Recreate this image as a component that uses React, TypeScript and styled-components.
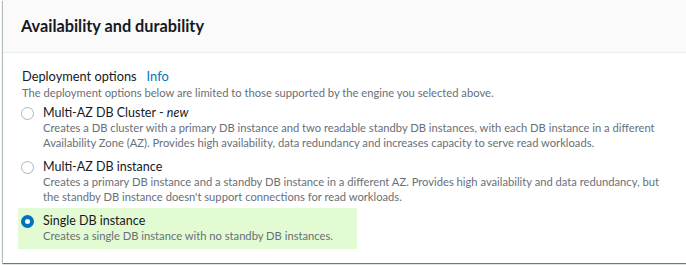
import * as React from 'react'
import styled, {createGlobalStyle} from 'styled-components'

const GlobalStyle = createGlobalStyle`
  html, body {
    margin: 0;
    padding: 0;
    background: #ffffff;
    overflow: hidden;
  }
  body {
    font-family: Lato, "Liberation Sans", sans-serif;
    color: #16191f;
  }
`

const SPage = styled.div`
  padding: 0 0 2px 3px;
  width: 720px;
`

const SContainer = styled.div`
  background: #ffffff;
  box-shadow: 0 1px 1px 0 rgba(0, 28, 36, 0.45), -1px 1px 1px 0 rgba(0, 28, 36, 0.25);
`

const SHeader = styled.div`
  height: 53px;
  box-sizing: border-box;
  background: #fafafa;
  border-bottom: 1px solid #eaeded;
  display: flex;
  align-items: center;
  padding: 0 18px;
`

const STitle = styled.h2`
  margin: 0;
  font-size: 16.3px;
  line-height: 20px;
  font-weight: 700;
  color: #16191f;
`

const SContent = styled.div`
  padding: 14px 18px 14px 15px;
`

const SLabel = styled.div`
  font-size: 12.8px;
  line-height: 18px;
  display: flex;
  align-items: center;
  gap: 10px;
  padding-left: 4px;
`

const SInfo = styled.a`
  color: #0073bb;
  text-decoration: none;
`

const SHint = styled.div`
  font-size: 11.2px;
  line-height: 15px;
  color: #687078;
  padding-left: 4px;
  white-space: nowrap;
`

const SOption = styled.div<{selected?: boolean}>`
  display: flex;
  align-items: flex-start;
  gap: 9px;
  padding: ${({selected}) => (selected ? '4px 4px 5px 3px' : '4px 4px 4px 3px')};
  background: ${({selected}) => (selected ? '#e2fbd2' : 'transparent')};
  width: ${({selected}) => (selected ? '332px' : 'auto')};
`

const SRadio = styled.span<{checked?: boolean}>`
  flex: none;
  width: 13px;
  height: 13px;
  margin-top: 3px;
  box-sizing: border-box;
  border-radius: 50%;
  border: ${({checked}) => (checked ? '4px solid #0073bb' : '1px solid #aab7b8')};
  background: #ffffff;
`

const SOptionText = styled.div`
  display: flex;
  flex-direction: column;
`

const SOptionLabel = styled.div`
  font-size: 12.5px;
  line-height: 17px;
  color: #16191f;

  & em {
    font-style: italic;
  }
`

const SOptionDesc = styled.div`
  font-size: 11.2px;
  line-height: 14.5px;
  color: #687078;
  white-space: nowrap;
`

interface IOption {
  label: React.ReactNode;
  desc: React.ReactNode;
  selected?: boolean;
}

const options: IOption[] = [
  {
    label: <>Multi-AZ DB Cluster - <em>new</em></>,
    desc: (
      <>
        Creates a DB cluster with a primary DB instance and two readable standby DB instances, with each DB instance in a different
        <br/>
        Availability Zone (AZ). Provides high availability, data redundancy and increases capacity to serve read workloads.
      </>
    ),
  },
  {
    label: 'Multi-AZ DB instance',
    desc: (
      <>
        Creates a primary DB instance and a standby DB instance in a different AZ. Provides high availability and data redundancy, but
        <br/>
        the standby DB instance doesn't support connections for read workloads.
      </>
    ),
  },
  {
    label: 'Single DB instance',
    desc: 'Creates a single DB instance with no standby DB instances.',
    selected: true,
  },
]

export default function App() {
  return (
    <>
      <GlobalStyle/>
      <SPage>
        <SContainer>
          <SHeader>
            <STitle>Availability and durability</STitle>
          </SHeader>
          <SContent>
            <SLabel>
              Deployment options <SInfo href="#">Info</SInfo>
            </SLabel>
            <SHint>The deployment options below are limited to those supported by the engine you selected above.</SHint>
            {options.map((o, i) => (
              <SOption key={i} selected={o.selected}>
                <SRadio checked={o.selected}/>
                <SOptionText>
                  <SOptionLabel>{o.label}</SOptionLabel>
                  <SOptionDesc>{o.desc}</SOptionDesc>
                </SOptionText>
              </SOption>
            ))}
          </SContent>
        </SContainer>
      </SPage>
    </>
  )
}
